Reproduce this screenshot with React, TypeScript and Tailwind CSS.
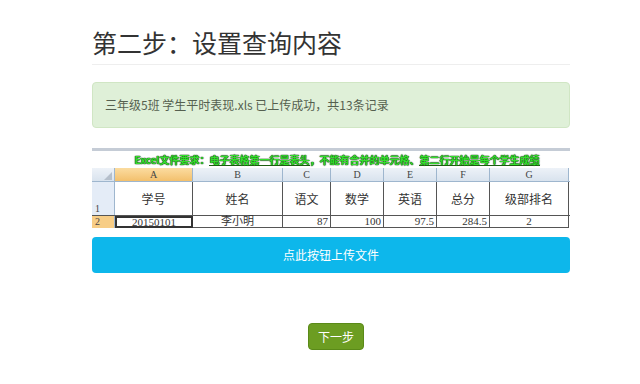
import React from "react";

const cols = [
  { key: "A", w: "w-[78px]", head: "学号", val: "20150101", align: "justify-center" },
  { key: "B", w: "w-[90px]", head: "姓名", val: "李小明", align: "justify-center" },
  { key: "C", w: "w-[48px]", head: "语文", val: "87", align: "justify-end" },
  { key: "D", w: "w-[53px]", head: "数学", val: "100", align: "justify-end" },
  { key: "E", w: "w-[53px]", head: "英语", val: "97.5", align: "justify-end" },
  { key: "F", w: "w-[53px]", head: "总分", val: "284.5", align: "justify-end" },
  { key: "G", w: "w-[79px]", head: "级部排名", val: "2", align: "justify-center" },
];

const cjk = "font-['Noto_Sans_CJK_SC','Noto_Sans',sans-serif]";
const sheet = "font-['Liberation_Serif','Noto_Sans_CJK_SC',serif]";

function ExcelPreview() {
  return (
    <div className="mt-[15px] flex flex-col">
      <div className="h-[5px] bg-white" />
      <div className="h-[3px] bg-[#c5ccd6]" />
      <div
        className={`flex h-[17px] items-center justify-center pl-[12px] text-[10px] font-bold leading-none text-[#35e02e] ${cjk} [text-shadow:0_0_1px_#0b3a08,0_0_1px_#0b3a08,0_0_1px_#0b3a08]`}
      >
        Excel文件要求：<span className="underline decoration-[#1d5c12]">电子表格第一行是表头</span>，不能有合并的单元格、
        <span className="underline decoration-[#1d5c12]">第二行开始是每个学生成绩</span>
      </div>

      {/* column letters */}
      <div className={`flex h-[13px] text-[10px] leading-none text-[#444] ${sheet}`}>
        <div className="relative w-[23px] border-r border-[#9eb6ce] bg-gradient-to-b from-[#edf2f8] to-[#d9e3ee]">
          <div className="absolute bottom-[1px] right-[2px] h-0 w-0 border-b-[8px] border-l-[8px] border-b-[#b5bfcb] border-l-transparent" />
        </div>
        {cols.map((c) => (
          <div
            key={c.key}
            className={`${c.w} flex items-center justify-center border-r border-[#9eb6ce] ${
              c.key === "A" ? "bg-gradient-to-b from-[#fbdca0] to-[#f3c06c]" : "bg-gradient-to-b from-[#edf2f8] to-[#d9e3ee]"
            }`}
          >
            {c.key}
          </div>
        ))}
      </div>

      {/* row 1 */}
      <div className="flex h-[34px] border-t border-[#9eb6ce]">
        <div className={`flex w-[23px] items-end pb-[1px] pl-[3px] text-[10px] leading-none text-[#444] bg-[#e4ecf7] border-r border-[#9eb6ce] ${sheet}`}>
          1
        </div>
        {cols.map((c) => (
          <div
            key={c.key}
            className={`${c.w} flex items-center justify-center border-r border-[#555] text-[12px] text-[#333] ${cjk}`}
          >
            {c.head}
          </div>
        ))}
      </div>

      {/* row 2 */}
      <div className="flex h-[13px] border-t border-[#555]">
        <div className={`flex w-[23px] items-center pl-[3px] text-[10px] leading-none text-[#444] bg-[#f7cd86] border-r border-[#9eb6ce] ${sheet}`}>
          2
        </div>
        {cols.map((c) => (
          <div
            key={c.key}
            className={`${c.w} flex items-center ${c.align} px-[2px] text-[11px] leading-none text-[#333] ${sheet} ${
              c.key === "A" ? "border-2 border-[#333]" : "border-r border-b border-[#555]"
            }`}
          >
            {c.val}
          </div>
        ))}
      </div>
    </div>
  );
}

export default function App() {
  return (
    <div className={`min-h-[384px] w-[640px] bg-white ${cjk}`}>
      <div className="ml-[92px] flex w-[478px] flex-col pt-[26px]">
        <h1 className="border-b border-[#eeeeee] pb-[6px] text-[25px] font-normal leading-[32px] text-[#333]">
          第二步<span className="inline-block w-[25px] text-center">：</span>设置查询内容
        </h1>

        <div className="mt-[17px] flex h-[46px] items-center rounded-[4px] border border-[#d0e6c4] bg-[#dff0d8] px-[12px] text-[12px] text-[#55604f]">
          三年级5班 学生平时表现.xls 已上传成功，共13条记录
        </div>

        <ExcelPreview />

        <button
          type="button"
          className="mt-[9px] h-[36px] rounded-[4px] bg-[#0db7eb] text-[12px] text-white"
        >
          点此按钮上传文件
        </button>

        <div className="mt-[50px] flex">
          <button
            type="button"
            className="ml-[216px] h-[27px] w-[56px] rounded-[4px] border border-[#5a8a18] bg-[#6c9d22] text-[12px] text-white"
          >
            下一步
          </button>
        </div>
      </div>
    </div>
  );
}
